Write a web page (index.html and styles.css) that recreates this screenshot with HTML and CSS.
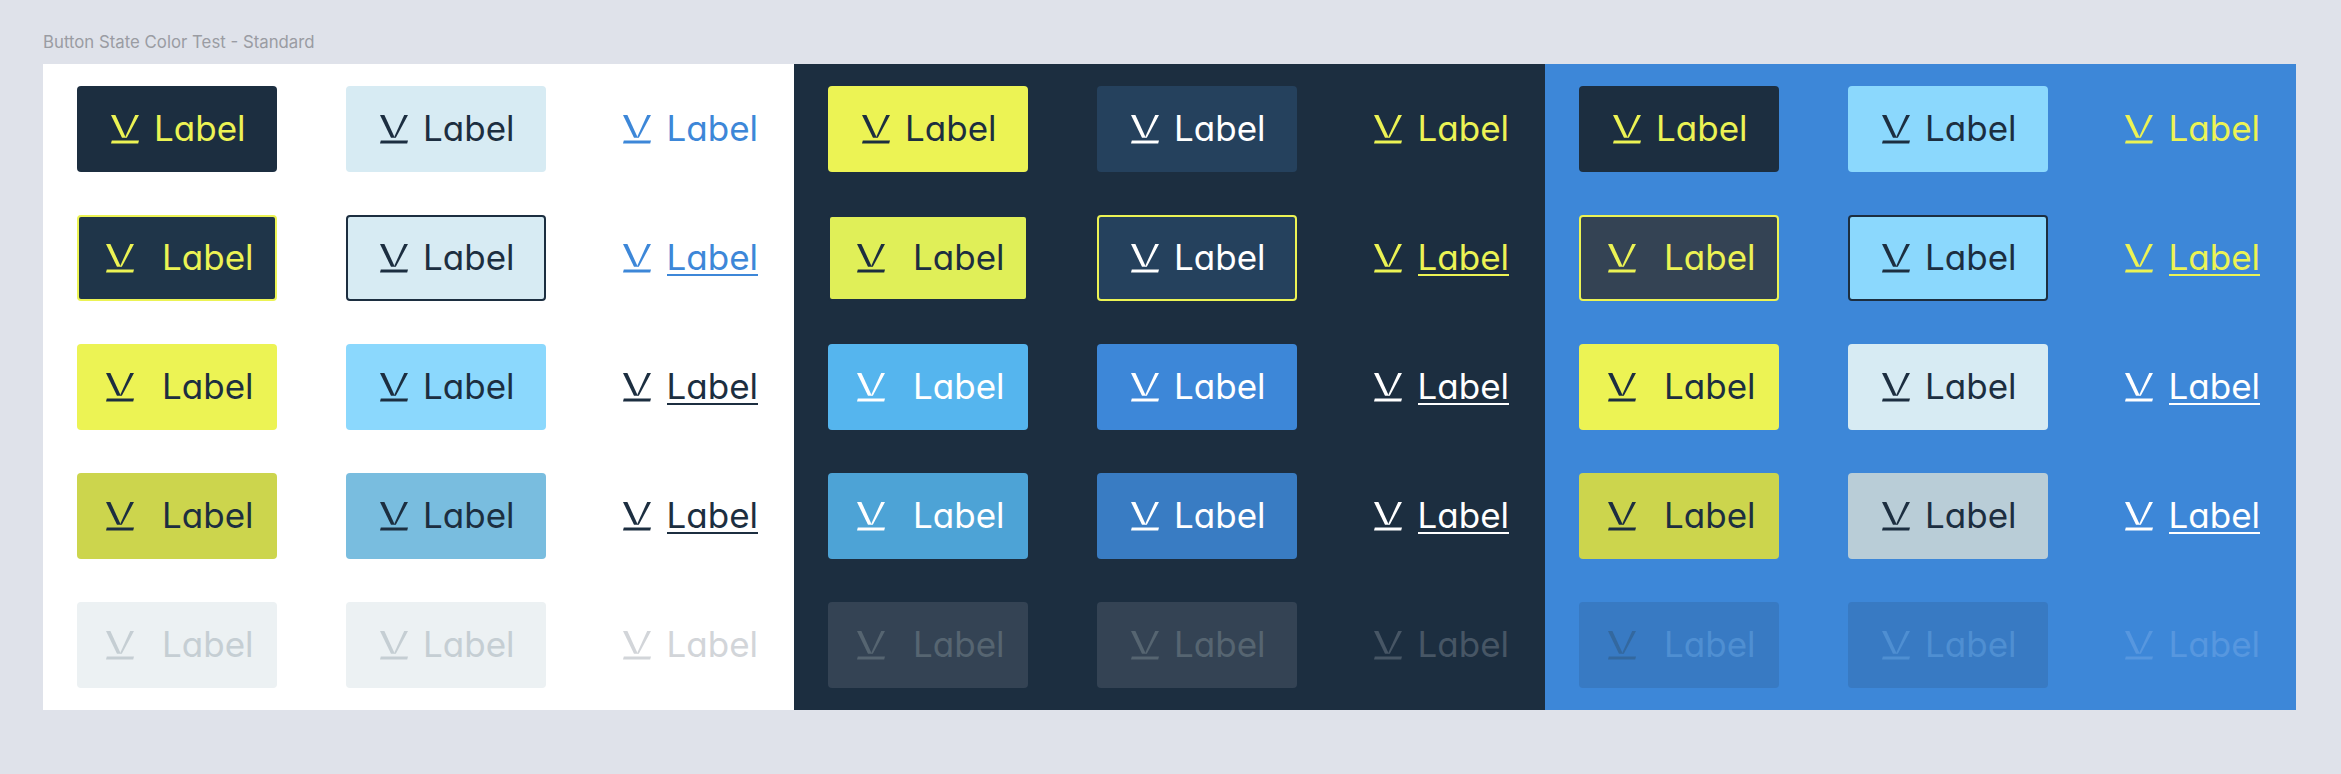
FILE: index.html
```html
<!DOCTYPE html>
<html lang="en">
<head>
    <meta charset="UTF-8">
    <title>Button State Color Test - Standard</title>
    <link rel="stylesheet" href="styles.css">
</head>
<body>
    <svg class="icon-defs" width="0" height="0">
        <symbol id="icon-v" viewBox="0 0 28 29">
            <path d="M0 0H4.4L14.8 22.8H11Z"/>
            <path d="M28 0H24.2L15 20.2L14 22.8H15.8Z"/>
            <path d="M0.8 25.6H28L27.2 28.6H0Z"/>
        </symbol>
    </svg>

    <h1 class="page-title">Button State Color Test - Standard</h1>

    <div class="board">
        <section class="panel panel-light">
            <a class="btn tight fill-navy"><svg class="icon"><use href="#icon-v"/></svg><span class="label">Label</span></a>
            <a class="btn tight fill-pale"><svg class="icon"><use href="#icon-v"/></svg><span class="label">Label</span></a>
            <a class="link text-blue"><svg class="icon"><use href="#icon-v"/></svg><span class="label">Label</span></a>

            <a class="btn fill-navy2 line-yellow"><svg class="icon"><use href="#icon-v"/></svg><span class="label">Label</span></a>
            <a class="btn tight fill-pale line-navy"><svg class="icon"><use href="#icon-v"/></svg><span class="label">Label</span></a>
            <a class="link under text-blue"><svg class="icon"><use href="#icon-v"/></svg><span class="label">Label</span></a>

            <a class="btn fill-yellow"><svg class="icon"><use href="#icon-v"/></svg><span class="label">Label</span></a>
            <a class="btn tight fill-sky"><svg class="icon"><use href="#icon-v"/></svg><span class="label">Label</span></a>
            <a class="link under text-navy"><svg class="icon"><use href="#icon-v"/></svg><span class="label">Label</span></a>

            <a class="btn fill-olive"><svg class="icon"><use href="#icon-v"/></svg><span class="label">Label</span></a>
            <a class="btn tight fill-steel"><svg class="icon"><use href="#icon-v"/></svg><span class="label">Label</span></a>
            <a class="link under text-navy"><svg class="icon"><use href="#icon-v"/></svg><span class="label">Label</span></a>

            <a class="btn off-light"><svg class="icon"><use href="#icon-v"/></svg><span class="label">Label</span></a>
            <a class="btn tight off-light"><svg class="icon"><use href="#icon-v"/></svg><span class="label">Label</span></a>
            <a class="link text-off-light"><svg class="icon"><use href="#icon-v"/></svg><span class="label">Label</span></a>
        </section>

        <section class="panel panel-dark">
            <a class="btn tight fill-yellow"><svg class="icon"><use href="#icon-v"/></svg><span class="label">Label</span></a>
            <a class="btn tight fill-denim"><svg class="icon"><use href="#icon-v"/></svg><span class="label">Label</span></a>
            <a class="link text-yellow"><svg class="icon"><use href="#icon-v"/></svg><span class="label">Label</span></a>

            <a class="btn fill-lime line-dark"><svg class="icon"><use href="#icon-v"/></svg><span class="label">Label</span></a>
            <a class="btn tight fill-denim line-yellow"><svg class="icon"><use href="#icon-v"/></svg><span class="label">Label</span></a>
            <a class="link under text-yellow"><svg class="icon"><use href="#icon-v"/></svg><span class="label">Label</span></a>

            <a class="btn fill-azure"><svg class="icon"><use href="#icon-v"/></svg><span class="label">Label</span></a>
            <a class="btn tight fill-blue"><svg class="icon"><use href="#icon-v"/></svg><span class="label">Label</span></a>
            <a class="link under text-white"><svg class="icon"><use href="#icon-v"/></svg><span class="label">Label</span></a>

            <a class="btn fill-azure2"><svg class="icon"><use href="#icon-v"/></svg><span class="label">Label</span></a>
            <a class="btn tight fill-blue2"><svg class="icon"><use href="#icon-v"/></svg><span class="label">Label</span></a>
            <a class="link under text-white"><svg class="icon"><use href="#icon-v"/></svg><span class="label">Label</span></a>

            <a class="btn off-dark"><svg class="icon"><use href="#icon-v"/></svg><span class="label">Label</span></a>
            <a class="btn tight off-dark"><svg class="icon"><use href="#icon-v"/></svg><span class="label">Label</span></a>
            <a class="link text-off-dark"><svg class="icon"><use href="#icon-v"/></svg><span class="label">Label</span></a>
        </section>

        <section class="panel panel-blue">
            <a class="btn tight fill-navy"><svg class="icon"><use href="#icon-v"/></svg><span class="label">Label</span></a>
            <a class="btn tight fill-sky"><svg class="icon"><use href="#icon-v"/></svg><span class="label">Label</span></a>
            <a class="link text-yellow"><svg class="icon"><use href="#icon-v"/></svg><span class="label">Label</span></a>

            <a class="btn fill-slate line-yellow"><svg class="icon"><use href="#icon-v"/></svg><span class="label">Label</span></a>
            <a class="btn tight fill-sky line-navy"><svg class="icon"><use href="#icon-v"/></svg><span class="label">Label</span></a>
            <a class="link under text-yellow"><svg class="icon"><use href="#icon-v"/></svg><span class="label">Label</span></a>

            <a class="btn fill-yellow"><svg class="icon"><use href="#icon-v"/></svg><span class="label">Label</span></a>
            <a class="btn tight fill-pale"><svg class="icon"><use href="#icon-v"/></svg><span class="label">Label</span></a>
            <a class="link under text-white"><svg class="icon"><use href="#icon-v"/></svg><span class="label">Label</span></a>

            <a class="btn fill-olive"><svg class="icon"><use href="#icon-v"/></svg><span class="label">Label</span></a>
            <a class="btn tight fill-mist"><svg class="icon"><use href="#icon-v"/></svg><span class="label">Label</span></a>
            <a class="link under text-white"><svg class="icon"><use href="#icon-v"/></svg><span class="label">Label</span></a>

            <a class="btn off-blue off-blue-dim"><svg class="icon"><use href="#icon-v"/></svg><span class="label">Label</span></a>
            <a class="btn tight off-blue"><svg class="icon"><use href="#icon-v"/></svg><span class="label">Label</span></a>
            <a class="link text-off-blue"><svg class="icon"><use href="#icon-v"/></svg><span class="label">Label</span></a>
        </section>
    </div>
</body>
</html>
```

FILE: styles.css
```css
* {
    margin: 0;
    padding: 0;
    box-sizing: border-box;
}

body {
    font-family: 'Inter', 'Liberation Sans', sans-serif;
    background: #dfe2ea;
    min-height: 100vh;
    padding: 32px 45px 0 43px;
}

.icon-defs {
    display: none;
}

.page-title {
    font-size: 16.8px;
    font-weight: 400;
    line-height: 20px;
    color: #9a9ca3;
    margin-bottom: 12px;
}

.board {
    display: grid;
    grid-template-columns: repeat(3, 751px);
}

.panel {
    display: grid;
    grid-template-columns: 200px 200px 145px;
    grid-auto-rows: 86px;
    column-gap: 69px;
    row-gap: 43px;
    padding: 22px 34px;
}

.panel-light { background: #fff; }
.panel-dark { background: #1c2e40; }
.panel-blue { background: #3d87d8; }

.btn,
.link {
    display: flex;
    align-items: center;
    font-size: 35px;
    font-feature-settings: "cv11";
}

.btn {
    gap: 28px;
    padding-left: 27px;
    border: 2px solid transparent;
    border-radius: 4px;
}

.btn.tight {
    gap: 15.5px;
    padding-left: 31.5px;
}

.link {
    gap: 15.5px;
    padding-left: 8px;
}

.icon {
    width: 28px;
    height: 29px;
    flex: none;
    fill: currentColor;
}

.label {
    line-height: 34px;
    padding-bottom: 3px;
}

.under .label {
    padding-bottom: 0;
    border-bottom: 2.5px solid currentColor;
}

/* fills */
.fill-navy { background: #1c2e40; color: #ecf354; }
.fill-navy2 { background: #1f3549; color: #ecf354; }
.fill-slate { background: #344354; color: #ecf354; }
.fill-pale { background: #d7ebf3; color: #1c2e40; }
.fill-yellow { background: #ecf354; color: #1c2e40; }
.fill-lime { background: #e0ef58; color: #1c2e40; }
.fill-olive { background: #ccd54d; color: #1c2e40; }
.fill-sky { background: #8bd8fd; color: #1c2e40; }
.fill-steel { background: #79bddf; color: #1c2e40; }
.fill-mist { background: #b9cdd7; color: #1c2e40; }
.fill-denim { background: #25415d; color: #fff; }
.fill-azure { background: #55b5ee; color: #fff; }
.fill-azure2 { background: #4da3d6; color: #fff; }
.fill-blue { background: #3d87d8; color: #fff; }
.fill-blue2 { background: #397cc3; color: #fff; }

/* focus lines */
.line-yellow { border-color: #ecf354; }
.line-navy { border-color: #1c2e40; }
.line-dark { border-color: #1c2e40; }

/* disabled */
.off-light { background: #ecf1f3; color: #c5ced3; }
.off-dark { background: #344354; color: #566571; }
.off-blue { background: #387ac3; color: #4f8fd2; }
.off-blue-dim .icon { color: #33689f; }

/* text only */
.text-blue { color: #3d87d8; }
.text-navy { color: #1c2e40; }
.text-yellow { color: #ecf354; }
.text-white { color: #fff; }
.text-off-light { color: #d2d5d9; }
.text-off-dark { color: #475665; }
.text-off-blue { color: #5797df; }
```
